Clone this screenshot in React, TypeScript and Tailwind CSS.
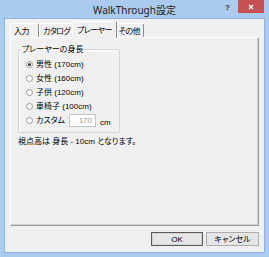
import { FC, ReactNode } from "react";

const FONT =
  "font-['Liberation_Sans','Noto_Sans_CJK_JP',sans-serif] [font-feature-settings:'palt'] text-[8px] leading-[11px] text-black";

const TAB_FONT =
  "font-['Noto_Sans_CJK_JP',sans-serif] [font-feature-settings:'palt'] whitespace-nowrap tracking-[-0.6px]";

const Tab: FC<{ label: string; selected?: boolean; extra?: string }> = ({
  label,
  selected,
  extra = "",
}) => {
  if (selected) {
    return (
      <div
        className={`-mx-[2px] h-[17px] -mb-[1px] z-10 relative bg-[#f0f0f0] border-t border-l border-white border-r border-r-[#8c8c8c] rounded-t-[2px] px-[4px] pt-[2px] ${TAB_FONT} ${extra}`}
      >
        {label}
      </div>
    );
  }
  return (
    <div
      className={`h-[14px] border-t border-l border-white border-r border-r-[#8c8c8c] rounded-t-[2px] px-[3px] pt-[1px] ${TAB_FONT} ${extra}`}
    >
      {label}
    </div>
  );
};

const Radio: FC<{ checked?: boolean; children: ReactNode }> = ({
  checked,
  children,
}) => (
  <div className="h-[14px] flex items-center">
    <span className="ml-[7px] w-[7px] h-[7px] rounded-full border border-[#9a9a9a] bg-white flex items-center justify-center">
      {checked && <span className="w-[3px] h-[3px] rounded-full bg-[#333]" />}
    </span>
    <span className="ml-[3px] whitespace-nowrap">{children}</span>
  </div>
);

function TitleBar() {
  return (
    <div className="h-[19px] relative flex items-center justify-center">
      <span className="font-['Noto_Sans','Noto_Sans_CJK_JP',sans-serif] text-[10px] leading-[12px] text-[#222]">
        WalkThrough設定
      </span>
      <span className="absolute right-[34px] top-[3px] text-[8px] leading-[10px] font-bold text-[#333]">
        ?
      </span>
      <div className="absolute right-0 top-0 w-[26px] h-[13px] bg-[#c75050] flex items-center justify-center">
        <svg width="6" height="6" viewBox="0 0 6 6">
          <path d="M1 1L5 5M5 1L1 5" stroke="#fff" strokeWidth="1.4" />
        </svg>
      </div>
    </div>
  );
}

export default function App() {
  return (
    <div
      className={`w-[269px] h-[257px] bg-[#aacbee] flex flex-col px-[5px] pb-[5px] ${FONT}`}
    >
      <TitleBar />
      <div className="flex-1 bg-[#f0f0f0] flex flex-col shadow-[0_0_0_1px_#8fb3dd]">
        {/* tabs */}
        <div className="h-[18px] flex items-end pl-[5px]">
          <Tab label="入力" extra="w-[29px]" />
          <Tab label="カタログ" />
          <Tab label="プレーヤー" selected />
          <Tab label="その他" />
        </div>

        {/* tab panel */}
        <div className="mx-[5px] h-[189px] border-t border-l border-white border-r border-b border-r-[#9a9a9a] border-b-[#9a9a9a] shadow-[inset_-1px_-1px_0_#cfcfcf] flex flex-col">
          <fieldset className="mt-[6px] ml-[7px] w-[102px] border border-[#d3d3d3] rounded-[2px] pt-[2px] pb-[5px] shadow-[inset_1px_1px_0_#fff]">
            <legend className="ml-[2px] px-[1px] whitespace-nowrap">プレーヤーの身長</legend>
            <Radio checked>男性 (170cm)</Radio>
            <Radio>女性 (160cm)</Radio>
            <Radio>子供 (120cm)</Radio>
            <Radio>車椅子 (100cm)</Radio>
            <div className="h-[14px] flex items-center">
              <span className="ml-[7px] w-[7px] h-[7px] rounded-full border border-[#9a9a9a] bg-white" />
              <span className="ml-[3px] w-[33px] whitespace-nowrap">カスタム</span>
              <div className="w-[27px] h-[13px] bg-white border border-[#c5c5c5] text-right pr-[3px] text-[#9a9a9a] leading-[11px]">
                170
              </div>
              <span className="ml-[4px] mt-[4px]">cm</span>
            </div>
          </fieldset>
          <div className="mt-[3px] ml-[7px]">視点高は 身長 - 10cm となります。</div>
        </div>

        {/* buttons */}
        <div className="mt-[6px] flex justify-end gap-[3px] pr-[5px]">
          <button className="w-[52px] h-[14px] bg-[#e6e6e6] border border-[#5a5a5a] shadow-[inset_0_0_0_1px_#d4d4d4] leading-[11px]">
            OK
          </button>
          <button className="w-[53px] h-[14px] bg-[#e6e6e6] border border-[#adadad] leading-[11px]">
            キャンセル
          </button>
        </div>
      </div>
    </div>
  );
}
